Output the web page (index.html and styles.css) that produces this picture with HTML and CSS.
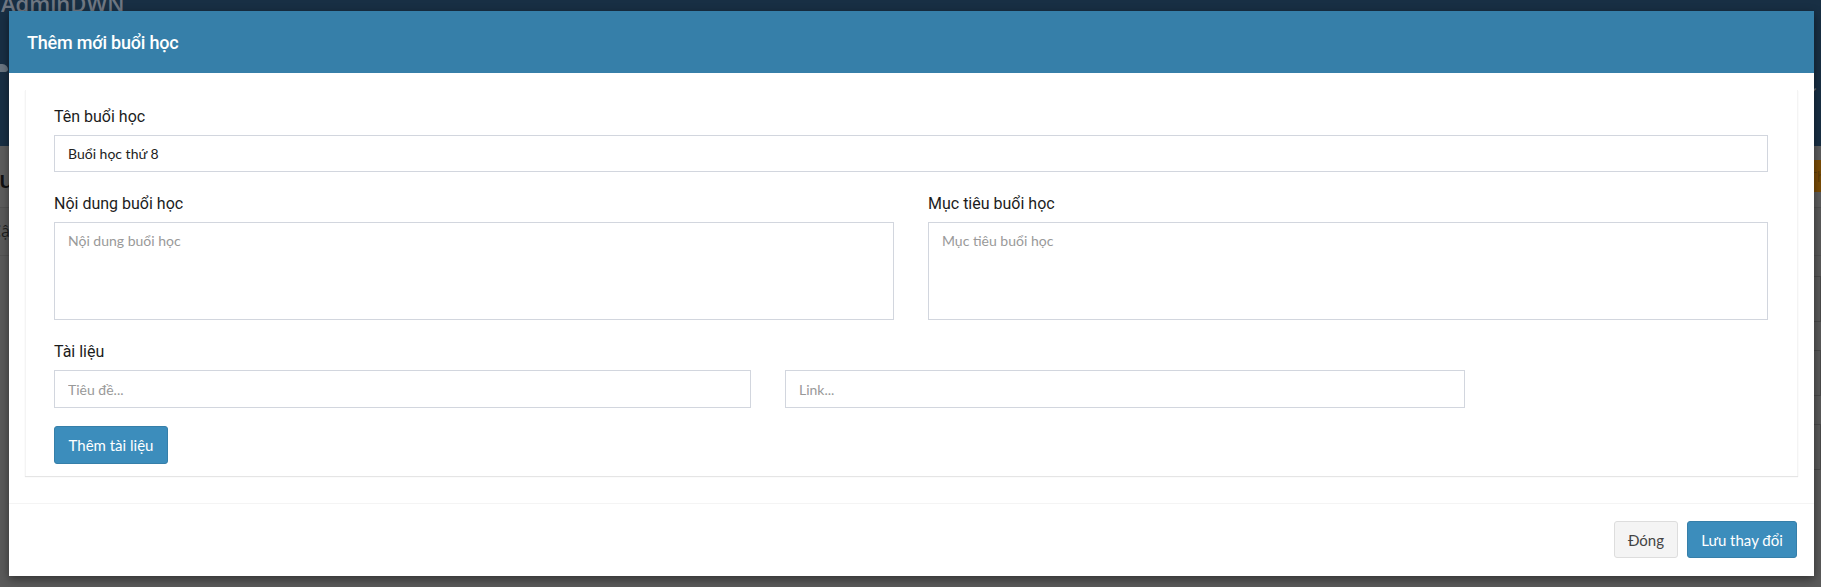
FILE: index.html
```html
<!DOCTYPE html>
<html lang="vi">
<head>
<meta charset="utf-8">
<title>Thêm mới buổi học</title>
<link rel="stylesheet" href="styles.css">
</head>
<body>
<div class="page">
  <header class="topbar">
    <div class="brand">AdminDWN</div>
    <div class="topbar-row">
      <span class="user-icon"></span>
      <span class="chevron">&#8964;</span>
    </div>
  </header>
  <section class="content-head">
    <h1 class="page-title">Quản lý buổi học</h1>
    <span class="btn-warn">Thêm mới</span>
  </section>
  <div class="crumb">Cập nhật</div>
  <div class="bg-rows">
    <div class="bg-row"></div>
    <div class="bg-row"></div>
    <div class="bg-row"></div>
  </div>
</div>

<div class="modal">
  <div class="modal-header">
    <h4 class="modal-title">Thêm mới buổi học</h4>
  </div>
  <div class="modal-body">
    <div class="box">
      <div class="group">
        <label class="lbl">Tên buổi học</label>
        <input class="ctl" type="text" value="Buổi học thứ 8">
      </div>
      <div class="two-cols">
        <div class="group">
          <label class="lbl">Nội dung buổi học</label>
          <textarea class="ctl area" placeholder="Nội dung buổi học"></textarea>
        </div>
        <div class="group">
          <label class="lbl">Mục tiêu buổi học</label>
          <textarea class="ctl area" placeholder="Mục tiêu buổi học"></textarea>
        </div>
      </div>
      <div class="group last">
        <label class="lbl">Tài liệu</label>
        <div class="doc-row">
          <input class="ctl" type="text" placeholder="Tiêu đề...">
          <input class="ctl" type="text" placeholder="Link...">
        </div>
      </div>
      <button class="btn btn-primary add-doc">Thêm tài liệu</button>
    </div>
  </div>
  <div class="modal-footer">
    <button class="btn btn-default">Đóng</button>
    <button class="btn btn-primary">Lưu thay đổi</button>
  </div>
</div>
</body>
</html>
```

FILE: styles.css
```css
* { box-sizing: border-box; }

html, body {
  margin: 0;
  padding: 0;
}

body {
  width: 1821px;
  height: 587px;
  overflow: hidden;
  background: #5a5a5a;
  font-family: Lato, "Noto Sans", sans-serif;
  position: relative;
}

/* ---------- page behind the modal (already dimmed) ---------- */
.page {
  width: 1821px;
}

.topbar {
  display: flow-root;
  height: 146px;
  background: #182f44;
}

.brand {
  font-family: "Open Sans", sans-serif;
  font-weight: 600;
  font-size: 22px;
  line-height: 22px;
  color: #6f7782;
  margin-top: -8px;
  padding-left: 1px;
}

.topbar-row {
  display: flex;
  justify-content: space-between;
  align-items: center;
  margin-top: 28px;
  padding: 0 2px 0 0;
}

.user-icon {
  width: 14px;
  height: 8px;
  border-radius: 7px 7px 3px 3px;
  background: #6a7682;
  margin-left: -6px;
}

.chevron {
  color: #6a7682;
  font-size: 16px;
  line-height: 16px;
  margin-top: 36px;
}

.content-head {
  display: flex;
  justify-content: space-between;
  align-items: center;
  height: 62px;
  background: #5d5d5d;
  border-bottom: 1px solid #525252;
}

.page-title {
  margin: 4px 0 0 -20px;
  font-family: "Open Sans", sans-serif;
  font-size: 24px;
  line-height: 30px;
  font-weight: 600;
  color: #111;
}

.btn-warn {
  background: #7a4c06;
  color: #5e3c08;
  font-family: "Open Sans", sans-serif;
  font-size: 15px;
  padding: 6px 12px;
  margin-right: -70px;
  margin-top: -2px;
}

.crumb {
  height: 48px;
  padding-top: 12px;
  font-family: "Open Sans", sans-serif;
  font-size: 16px;
  line-height: 22px;
  color: #1e1e1e;
  margin-left: -9px;
  border-bottom: 1px solid #525252;
}

.bg-rows {
  padding: 20px 0 0 18px;
}

.bg-row {
  height: 46px;
  border: 1px solid #4a4a4a;
  margin-bottom: 28px;
}

/* ---------- modal ---------- */
.modal {
  position: absolute;
  left: 9px;
  top: 11px;
  width: 1805px;
  background: #fff;
  box-shadow: 0 3px 9px rgba(0, 0, 0, 0.45);
}

.modal-header {
  height: 62px;
  background: #367fa9;
  display: flex;
  align-items: center;
  padding: 0 18px;
}

.modal-title {
  margin: 0;
  font-family: Roboto, "Noto Sans", sans-serif;
  font-weight: 500;
  font-size: 18px;
  letter-spacing: -0.2px;
  color: #fff;
}

.modal-body {
  padding: 17px 16px 27px 16px;
}

.box {
  background: #fff;
  border-left: 1px solid #f4f4f4;
  border-right: 1px solid #f4f4f4;
  box-shadow: 0 1px 1px rgba(0, 0, 0, 0.1);
  padding: 16px 29px 12px 28px;
}

.group {
  margin-bottom: 21px;
}

.group.last {
  margin-bottom: 18px;
}

.lbl {
  display: block;
  font-family: Roboto, "Noto Sans", sans-serif;
  font-size: 16px;
  line-height: 22px;
  color: #1c1c1c;
  margin-bottom: 7px;
}

.ctl {
  display: block;
  width: 100%;
  height: 37px;
  border: 1px solid #d2d6de;
  border-radius: 0;
  background: #fff;
  padding: 6px 13px;
  font-family: Lato, "Noto Sans", sans-serif;
  font-size: 14px;
  color: #222;
  outline: none;
}

.ctl::placeholder {
  color: #999;
}

.area {
  height: 98px;
  resize: none;
  padding: 8px 13px;
  line-height: 20px;
}

.two-cols {
  display: grid;
  grid-template-columns: 1fr 1fr;
  column-gap: 34px;
}

.doc-row {
  display: grid;
  grid-template-columns: 697px 680px;
  column-gap: 34px;
}

.doc-row .ctl {
  height: 38px;
}

.btn {
  display: inline-block;
  height: 38px;
  padding: 0 12px;
  border-radius: 3px;
  font-family: Lato, "Noto Sans", sans-serif;
  font-size: 15px;
  cursor: pointer;
}

.btn-primary {
  background: #3c8dbc;
  border: 1px solid #367fa9;
  color: #fff;
}

.btn-default {
  background: #f4f4f4;
  border: 1px solid #ddd;
  color: #444;
}

.add-doc {
  width: 114px;
}

.modal-footer {
  border-top: 1px solid #f4f4f4;
  display: flex;
  justify-content: flex-end;
  gap: 9px;
  padding: 17px 17px 18px 17px;
}

.modal-footer .btn {
  height: 37px;
}

.modal-footer .btn-default {
  width: 64px;
}

.modal-footer .btn-primary {
  width: 110px;
}
```
